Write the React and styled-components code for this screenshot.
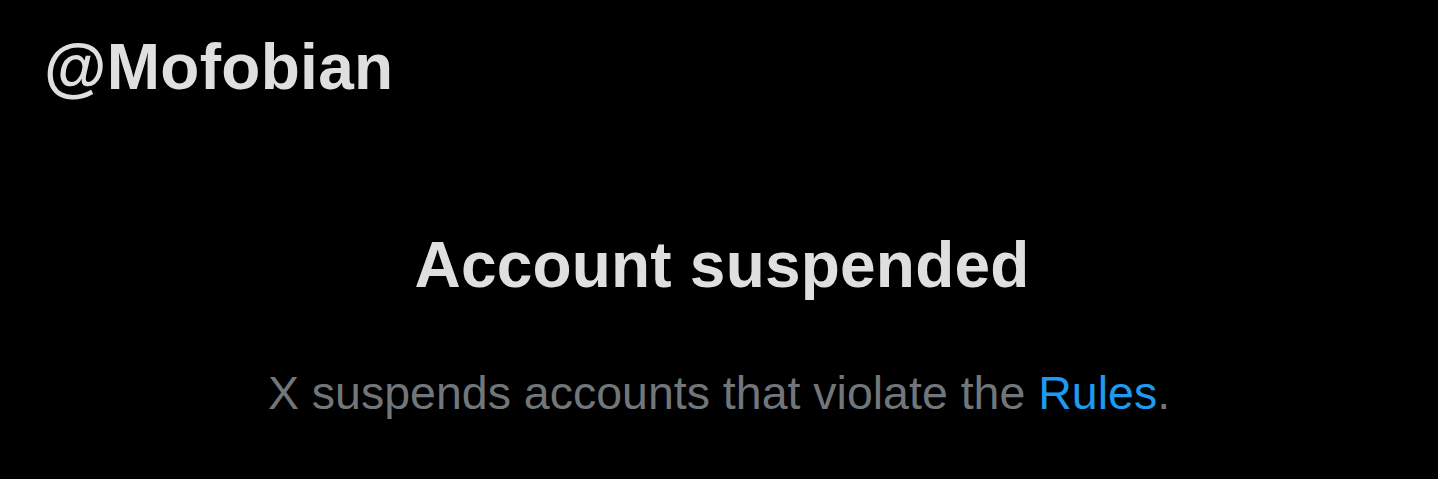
import styled, {createGlobalStyle} from 'styled-components'

const Global = createGlobalStyle`
  html, body {
    margin: 0;
    padding: 0;
    background: #000;
  }
  body {
    font-family: "Liberation Sans", Arial, sans-serif;
  }
`;

const Page = styled.div`
  width: 1438px;
  height: 479px;
  background: #000;
  display: flex;
  flex-direction: column;
  padding: 35px 44px 0;
  box-sizing: border-box;
  overflow: hidden;
`;

const Handle = styled.h1`
  margin: 0;
  font-size: 64px;
  line-height: 64px;
  font-weight: 700;
  color: #dfdfdf;
  letter-spacing: 0.3px;
`;

const Notice = styled.section`
  display: flex;
  flex-direction: column;
  align-items: center;
  margin-top: 134px;
  gap: 73px;
`;

const Title = styled.h2`
  margin: 0;
  font-size: 64px;
  line-height: 64px;
  font-weight: 700;
  color: #dfdfdf;
  letter-spacing: 0.2px;
  padding-left: 6px;
`;

const Text = styled.p`
  margin: 0;
  font-size: 46.5px;
  line-height: 46px;
  color: #71767b;
`;

const RulesLink = styled.a`
  color: #1d9bf0;
  text-decoration: none;
`;

export default function App(){
    return(
        <>
            <Global/>
            <Page>
                <Handle>@Mofobian</Handle>
                <Notice>
                    <Title>Account suspended</Title>
                    <Text>
                        X suspends accounts that violate the <RulesLink href='#'>Rules</RulesLink>.
                    </Text>
                </Notice>
            </Page>
        </>
    )
}
